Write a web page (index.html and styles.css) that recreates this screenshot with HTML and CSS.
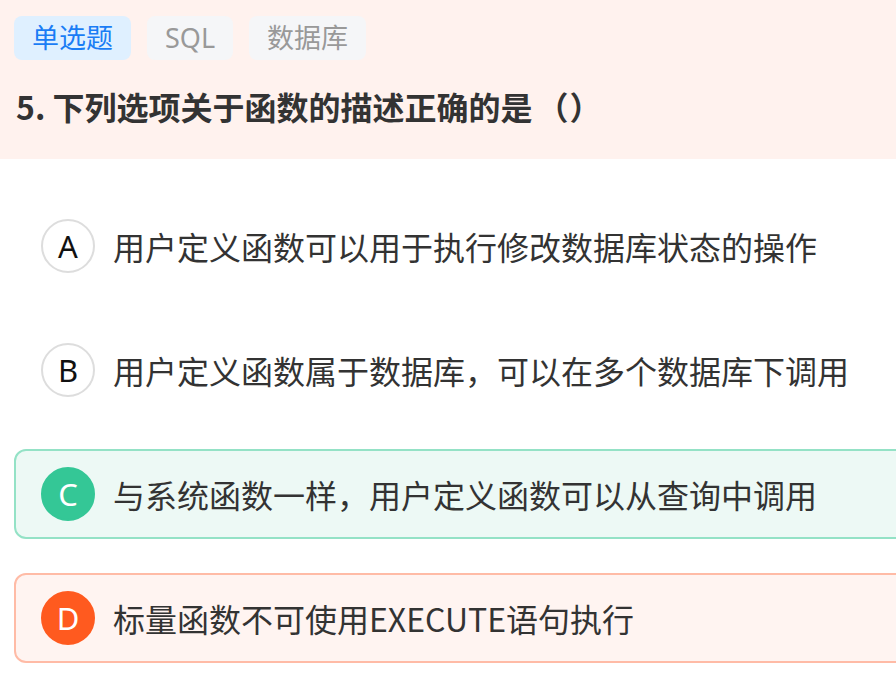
FILE: index.html
```html
<!DOCTYPE html>
<html lang="zh-CN">
<head>
<meta charset="utf-8">
<title>单选题</title>
<link rel="stylesheet" href="styles.css">
</head>
<body>
<div class="header">
  <div class="tags">
    <span class="tag tag-type">单选题</span>
    <span class="tag tag-gray">SQL</span>
    <span class="tag tag-gray">数据库</span>
  </div>
  <div class="title">5. 下列选项关于函数的描述正确的是<span class="paren">（）</span></div>
</div>
<div class="options">
  <div class="option">
    <span class="letter">A</span>
    <span class="text">用户定义函数可以用于执行修改数据库状态的操作</span>
  </div>
  <div class="option">
    <span class="letter">B</span>
    <span class="text">用户定义函数属于数据库，可以在多个数据库下调用</span>
  </div>
  <div class="option option-right">
    <span class="letter">C</span>
    <span class="text">与系统函数一样，用户定义函数可以从查询中调用</span>
  </div>
  <div class="option option-wrong">
    <span class="letter">D</span>
    <span class="text">标量函数不可使用EXECUTE语句执行</span>
  </div>
</div>
</body>
</html>
```
FILE: styles.css
```css
html, body {
  margin: 0;
  padding: 0;
  overflow: hidden;
  background: #ffffff;
  font-family: "Noto Sans", "Noto Sans CJK SC", sans-serif;
  color: #333333;
}

.header {
  background: #fff2ee;
  height: 159px;
  box-sizing: border-box;
  padding: 16px 14px 0 14px;
}

.tags {
  display: flex;
  gap: 16px;
}

.tag {
  height: 44px;
  line-height: 44px;
  padding: 0 18px;
  border-radius: 8px;
  font-size: 27px;
  font-family: "Noto Sans", "Noto Sans CJK SC", sans-serif;
}

.tag-type {
  background: #dff0ff;
  color: #1a7df5;
}

.tag-gray {
  background: #f5f6f8;
  color: #999999;
}

.title {
  margin-top: 26px;
  padding-left: 2px;
  font-size: 32px;
  font-weight: bold;
  line-height: 40px;
  color: #333333;
  font-family: "Noto Sans CJK SC", sans-serif;
}

.paren {
  letter-spacing: 1px;
  padding-left: 4px;
}

.options {
  padding: 42px 0 0 14px;
  display: flex;
  flex-direction: column;
  gap: 34px;
}

.option {
  height: 90px;
  margin-right: -30px;
  box-sizing: border-box;
  border: 2px solid transparent;
  border-radius: 12px;
  display: flex;
  align-items: center;
  padding-left: 25px;
  gap: 18px;
}

.letter {
  width: 54px;
  height: 54px;
  box-sizing: border-box;
  border-radius: 50%;
  border: 2px solid #dddddd;
  display: flex;
  align-items: center;
  justify-content: center;
  font-size: 31px;
  color: #111111;
  font-family: "Noto Sans", sans-serif;
  flex: none;
}

.text {
  font-size: 32px;
  color: #333333;
  font-family: "Noto Sans CJK SC", sans-serif;
  white-space: nowrap;
}

.option-right {
  border-color: #94e2c6;
  background: #edf9f5;
}

.option-right .letter {
  border-color: #34c796;
  background: #34c796;
  color: #ffffff;
}

.option-wrong {
  border-color: #ffbba6;
  background: #fff4f1;
}

.option-wrong .letter {
  border-color: #ff5a1f;
  background: #ff5a1f;
  color: #ffffff;
}
```
